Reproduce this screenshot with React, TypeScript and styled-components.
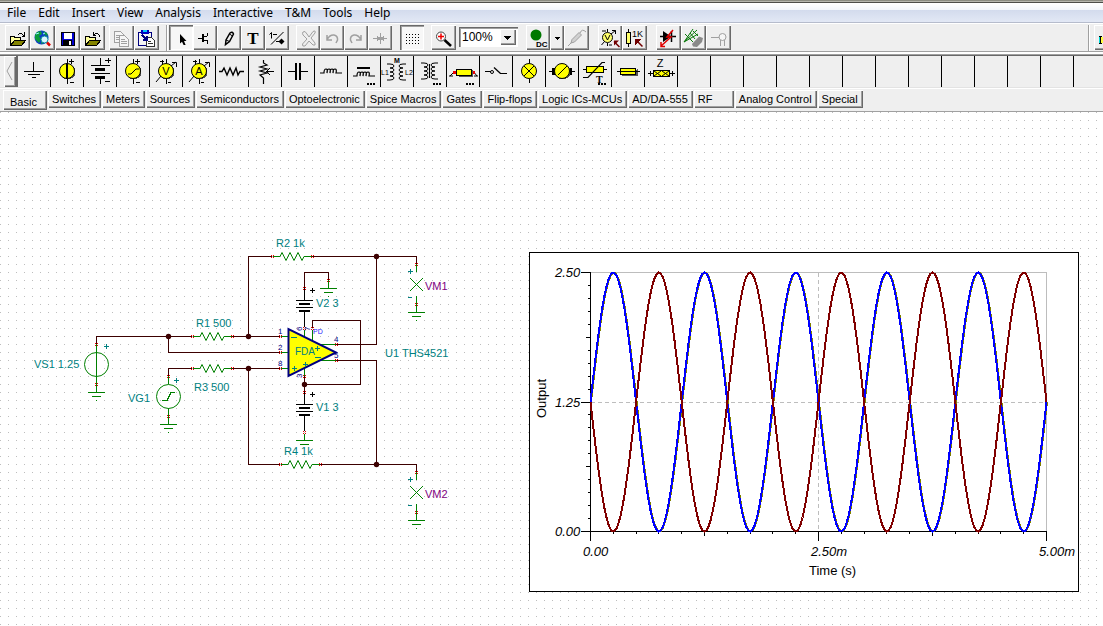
import React from "react";
import styled, { createGlobalStyle, css } from "styled-components";

const GlobalStyle = createGlobalStyle`
  *, *::before, *::after { box-sizing: border-box; }
  html, body, #root { height: 100%; margin: 0; }
  body { background: #efefef; overflow: hidden; }
`;

const face = "#efefef";
const sans = `"Liberation Sans", Arial, sans-serif`;

const AppFrame = styled.div`
  display: flex;
  flex-direction: column;
  height: 100%;
  overflow: hidden;
  color: #000;
  font: 11px/14px ${sans};
`;

const TitleEdge = styled.div`
  flex: none;
  height: 3px;
  background: linear-gradient(#8a8a80 0 1px, #b5b5ad 1px 2px, #4c4c48 2px);
`;

const MenuBar = styled.nav`
  flex: none;
  display: flex;
  height: 20px;
  padding-left: 1px;
  background: linear-gradient(#fff 0, #f1f4fa 7px, #d3dbed 7px, #e2e8f5 19px);
  border-bottom: 1px solid #b6bccc;
`;

const MenuItem = styled.button`
  height: 19px;
  margin: 0;
  padding: 0 6px;
  border: 0;
  background: none;
  color: #000;
  font: 12px/19px "Noto Sans", "Open Sans", sans-serif;
`;

const ToolBar = styled.div`
  flex: none;
  display: flex;
  align-items: flex-start;
  height: 29px;
  padding: 1px 0 0 5px;
  background: ${face};
  border-top: 1px solid #fff;
  border-bottom: 1px solid #a0a0a0;
`;

const ToolGroup = styled.div<{ $gap?: number }>`
  flex: none;
  display: flex;
  margin-right: ${(p) => p.$gap ?? 0}px;
`;

const raised = css`
  box-shadow: inset 1px 1px #fff, inset -1px -1px #696969, inset -2px -2px #a0a0a0;
`;

const sunken = css`
  background: #f7f7f7;
  box-shadow: inset 1px 1px #696969, inset 2px 2px #a0a0a0, inset -1px -1px #fff;
`;

const ToolButton = styled.button<{ $width?: number; $pressed?: boolean }>`
  width: ${(p) => p.$width ?? 24}px;
  height: 25px;
  margin: 0;
  padding: 0;
  border: 0;
  background: ${face};
  overflow: hidden;
  ${(p) => (p.$pressed ? sunken : raised)}
  svg { display: block; }
`;

const Divider = styled.span`
  width: 2px;
  height: 26px;
  margin-right: 1px;
  border-left: 1px solid #a0a0a0;
  border-right: 1px solid #fff;
`;

const ZoomBox = styled.label`
  position: relative;
  display: flex;
  width: 59px;
  height: 20px;
  margin: 2px 8px 0 3px;
  ${sunken}
  background: #fff;
`;

const ZoomSelect = styled.select`
  appearance: none;
  flex: 1;
  width: 100%;
  border: 0;
  padding: 0 18px 0 3px;
  background: none;
  color: #000;
  font: 12px/16px ${sans};
`;

const ZoomArrow = styled.span`
  position: absolute;
  top: 2px;
  right: 2px;
  width: 16px;
  height: 16px;
  background: ${face};
  pointer-events: none;
  ${raised}
  svg { display: block; }
`;

const Spacer = styled.span`
  flex: 1;
`;

const PartsBar = styled.div`
  flex: none;
  display: flex;
  height: 36px;
  padding: 4px 0 0 4px;
  background: linear-gradient(#fff 0 2px, #a0a0a0 2px 3px, #696969 3px 4px, ${face} 4px 35px, #e3e3e3 35px);
`;

const ScrollButton = styled.button`
  flex: none;
  width: 12px;
  height: 31px;
  padding: 0;
  border: 0;
  background: ${face};
  ${raised}
  svg { display: block; }
`;

const PartsRail = styled.div`
  flex: 1;
  display: flex;
  overflow: hidden;
  height: 31px;
  border-left: 2px solid #696969;
`;

const PartCell = styled.button`
  flex: none;
  width: 33px;
  height: 31px;
  margin: 0;
  padding: 0;
  border: 0;
  border-right: 1px solid #000;
  background: ${face};
  svg { display: block; }
`;

const TabBar = styled.div`
  flex: none;
  display: flex;
  align-items: flex-start;
  gap: 1px;
  height: 24px;
  padding: 1px 0 0 3px;
  background: ${face};
  border-top: 1px solid #fff;
  border-bottom: 1px solid #a0a0a0;
`;

const Tab = styled.button<{ $active?: boolean }>`
  flex: none;
  min-width: ${(p) => (p.$active ? 44 : 40)}px;
  height: ${(p) => (p.$active ? 20 : 18)}px;
  margin: 0;
  padding: ${(p) => (p.$active ? "3px 7px 0" : "0 5px 0 4px")};
  border: 0;
  background: ${face};
  color: #000;
  text-align: left;
  white-space: nowrap;
  font: 11px/16px ${sans};
  ${raised}
`;

const Canvas = styled.main`
  flex: 1;
  display: flex;
  align-items: flex-start;
  gap: 29px;
  min-height: 0;
  overflow: hidden;
  background-color: #fff;
  background-image: linear-gradient(transparent 1px, #fff 1px), linear-gradient(90deg, #bdbdbd 1px, #fff 1px);
  background-size: 8px 8px;
`;

const Schematic = styled.svg`
  flex: none;
  display: block;
  font-family: ${sans};
`;

const Chart = styled.svg`
  flex: none;
  display: block;
  margin-top: 140px;
  background: #fff;
  border: 1px solid #000;
  font-family: ${sans};
`;

const Line = styled.path<{ $color?: string; $width?: number }>`
  fill: none;
  stroke: ${(p) => p.$color ?? "#000"};
  stroke-width: ${(p) => p.$width ?? 1}px;
`;

const Label = styled.text<{ $color?: string; $size?: number }>`
  fill: ${(p) => p.$color ?? "#008080"};
  font-size: ${(p) => p.$size ?? 11}px;
`;

/* ---------- toolbar icons, 24 x 24 ---------- */

function Glyph({ children, smooth }: { children?: React.ReactNode; smooth?: boolean }) {
  return (
    <svg width="24" height="24" viewBox="0 0 24 24" shapeRendering={smooth ? "auto" : "crispEdges"} aria-hidden="true">
      {children}
    </svg>
  );
}

const Folder = ({ arrow }: { arrow: string }) => (
  <Glyph>
    <path d="M5.5 19.500V10.500H8.500L10.500 11.500H15.500V14.500" fill="#ffff9c" stroke="#000" />
    <path d="M5.500 19.500L9.500 14.500H20.500L16.500 19.500Z" fill="#848400" stroke="#000" />
    <Line d={arrow} />
  </Glyph>
);

const toolIcons: Record<string, React.ReactNode> = {
  open: <Folder arrow="M13 8.500H14M14 7.500H17M17 8.500H18M18 9.500H20M17 10.500H20M19.500 6V10" />,
  revert: <Folder arrow="M19.500 9V11M18 8.500H19M15 7.500H18M14 8.500H15M13.500 6V10M13 9.500H16" />,
  web: (
    <Glyph smooth>
      <circle cx="11.500" cy="11.500" r="7" fill="#0a3cc8" />
      <path d="M7 6L11 5L12 8L9 10L11 13L9 17L5 13L5 9Z M13 5L17 7L18 10L15 9Z M12 14L15 13L14 17L11 18Z" fill="#0c9b3c" />
      <path d="M6 8L9 7M13 8L15 7" stroke="#9ff" />
      <circle cx="14.500" cy="13.500" r="3.500" fill="#d9f6ff" stroke="#0b8c9b" />
      <path d="M17 16.500L20 19.500" stroke="#d00" strokeWidth="2.500" />
    </Glyph>
  ),
  save: (
    <Glyph>
      <rect x="6" y="6" width="14" height="14" fill="#000" />
      <rect x="7" y="7" width="12" height="12" fill="#0000d0" />
      <rect x="9" y="7" width="8" height="6" fill="#fff" />
      <rect x="8" y="14" width="9" height="5" fill="#000" />
      <rect x="14" y="15" width="2" height="4" fill="#fff" />
    </Glyph>
  ),
  copy: (
    <Glyph>
      <path d="M5.500 5.500H11.500L14.500 8.500V16.500H5.500Z M7 9.500H12M7 11.500H12M7 13.500H12" fill="#f5f5f5" stroke="#a0a0a0" />
      <path d="M10.500 9.500H15.500L19.500 13.500V20.500H10.500Z M12 13.500H16M12 15.500H18M12 17.500H18" fill="#f5f5f5" stroke="#a0a0a0" />
    </Glyph>
  ),
  paste: (
    <Glyph>
      <path d="M4.500 6.500H17.500V19.500H4.500Z" fill="#f4f4f4" stroke="#000080" />
      <rect x="7" y="4" width="8" height="4" fill="#0000c0" />
      <rect x="9" y="4" width="4" height="2" fill="#00c8ff" />
      <path d="M12.500 11.500H17.500L20.500 14.500V20.500H12.500Z M14 15.500H17M14 17.500H19" fill="#fff" stroke="#333" />
      <path d="M8 9L13 14M13 10V14H9" stroke="#000080" strokeWidth="2" fill="none" />
    </Glyph>
  ),
  select: (
    <Glyph smooth>
      <path d="M11 8V17.500L13 15.800L14.600 19H16.600L15 15H17.500Z" fill="#000" />
    </Glyph>
  ),
  wire: (
    <Glyph>
      <Line d="M5 12.500H10M10 10.500H14M14.500 7V10M10 14.500H14M14.500 14V18M14 17.500H15" />
      <Line d="M10 8V16" $width={2} />
    </Glyph>
  ),
  pen: (
    <Glyph smooth>
      <path d="M8.500 18.500L9 14L13 7Q15.500 5 16.500 8L12.500 15.500Z" fill="none" stroke="#000" strokeWidth="1.500" />
      <path d="M12.500 8L15.500 10M9 14L12.500 15.500M8.500 18.500V16" stroke="#000" fill="none" />
    </Glyph>
  ),
  text: (
    <Glyph>
      <text x="12" y="18" textAnchor="middle" fontFamily="Liberation Serif" fontWeight="700" fontSize="17">T</text>
    </Glyph>
  ),
  formula: (
    <Glyph smooth>
      <path d="M4.500 8.500L6.500 6.500V12.500M8 8.500H12M6 18.500L18.500 6" fill="none" stroke="#000" />
      <path d="M11 15.500H19" stroke="#000" />
      <path d="M16.500 12.500L19.500 15.500L16.500 18.500L13.500 15.500Z" />
    </Glyph>
  ),
  cut: (
    <Glyph smooth>
      <path d="M7 6Q9 4 11 8L13 11L17 5.500Q20 4 19 7L15 12L19 17Q20 20 17 19L13 15L9 20Q6 21 6.500 18L11 13L7 9Q6 7 7 6Z" fill="none" stroke="#a0a0a0" />
    </Glyph>
  ),
  undo: (
    <Glyph smooth>
      <path d="M7.500 13Q10 8.500 14 9Q18 10 17.500 14L16 17M7 9V14H12" fill="none" stroke="#a0a0a0" strokeWidth="1.500" />
    </Glyph>
  ),
  redo: (
    <Glyph smooth>
      <path d="M16.500 13Q14 8.500 10 9Q6 10 6.500 14L8 17M17 9V14H12" fill="none" stroke="#a0a0a0" strokeWidth="1.500" />
    </Glyph>
  ),
  node: (
    <Glyph>
      <path d="M5 12.500H19M12.500 7V18M9.500 10V15M15.500 10V15" stroke="#a0a0a0" />
      <path d="M10 11L15 14M15 11L10 14" stroke="#a0a0a0" />
    </Glyph>
  ),
  grid: (
    <Glyph>
      {[8, 11, 14, 17].map((y) => (
        <Line key={y} d={`M6 ${y}.500H21`} strokeDasharray="1 2" />
      ))}
    </Glyph>
  ),
  zoom: (
    <Glyph smooth>
      <circle cx="10" cy="10.500" r="4.500" fill="#fff" stroke="#444" />
      <path d="M7 10.500H13M10 7.500V13.500" stroke="#e00" strokeWidth="1.500" />
      <path d="M13.500 14L20 20" stroke="#000" strokeWidth="2.500" />
    </Glyph>
  ),
  dc: (
    <Glyph smooth>
      <circle cx="10" cy="9" r="5.500" fill="#007800" />
      <text x="10" y="21" fontFamily="Liberation Sans" fontWeight="700" fontSize="8">DC</text>
    </Glyph>
  ),
  more: (
    <Glyph>
      <path d="M4 11H10L7 14Z" fill="#000" />
    </Glyph>
  ),
  probe: (
    <Glyph smooth>
      <path d="M4 20L8 16" stroke="#a0a0a0" />
      <path d="M8 13.500L15 6.500L17.500 9L10.500 16L7 17Z" fill="#d0d0d0" stroke="#a0a0a0" />
      <path d="M16 7Q18 2 22 6" stroke="#a0a0a0" fill="none" />
    </Glyph>
  ),
  meter: (
    <Glyph smooth>
      <circle cx="9.500" cy="11.500" r="5" fill="#ffff6a" stroke="#000" />
      <path d="M7 9L9.500 14L12 9M3.500 19L6.500 15.500M13 8L17.500 4.500M14 4.500H17.500V8M9.500 3V6M4 5H8M9.500 17V20M11 19H14" stroke="#000" fill="none" />
      <path d="M21.500 21L16 15.500" stroke="#700000" strokeWidth="1.500" />
      <path d="M16 14.500H21L16 19.500Z" fill="#700000" />
    </Glyph>
  ),
  ohm: (
    <Glyph>
      <path d="M6.500 3V21" stroke="#000" />
      <rect x="4.500" y="6.500" width="4" height="11" fill="#ffff6a" stroke="#000" />
      <text x="10" y="11" fontFamily="Liberation Sans" fontSize="9">1K</text>
      <path d="M20.500 20.500L14 14" stroke="#700000" shapeRendering="auto" strokeWidth="1.500" />
      <path d="M13 13H19L13 19Z" fill="#700000" />
    </Glyph>
  ),
  diode: (
    <Glyph smooth>
      <path d="M4 10.500H20M15.500 5V16" stroke="#000" strokeWidth="1.500" />
      <path d="M7 5L15 10.500L7 16Z" />
      <path d="M17 4L11 11H15L5 20M5 16V20.500H9" stroke="#e00000" strokeWidth="1.500" fill="none" />
    </Glyph>
  ),
  sensor: (
    <Glyph smooth>
      <path d="M3 16L16 4M3 16L17 8M3 16L12 3M4 8L12 16M9 7L14 13M12 5L17 10" stroke="#087808" fill="none" />
      <path d="M11 18L18 10.500L22 12L21 16L16 21L12 20.500Z" fill="#8a8a8a" />
    </Glyph>
  ),
  pin: (
    <Glyph smooth>
      <path d="M5 11.500H13M14.500 14V20M18.500 14V20" stroke="#a0a0a0" />
      <circle cx="16.500" cy="11" r="3.500" fill="#f5f5f5" stroke="#a0a0a0" />
    </Glyph>
  ),
  edge: (
    <Glyph>
      <rect x="5" y="11" width="1" height="6" fill="#0dd" />
      <path d="M6.500 11V18M5 10.500H8M5 17.500H8" stroke="#000" />
      <rect x="7" y="11" width="6" height="6" fill="#ffff40" />
    </Glyph>
  ),
};

/* ---------- component icons, 32 x 31 ---------- */

const yellow = "#ffff00";

const Disc = ({ children }: { children?: React.ReactNode }) => (
  <>
    <circle cx="17" cy="16" r="7.500" fill="#555" />
    <circle cx="16" cy="15" r="7.500" fill={yellow} stroke="#000" shapeRendering="auto" />
    <Line d="M16.500 3V7M16.500 23V28M18 5.500H23M20.500 3V8M19 26.500H23" />
    {children}
  </>
);

const MeterDisc = ({ letter }: { letter: string }) => (
  <>
    <circle cx="17" cy="16" r="7.500" fill="#555" />
    <circle cx="16" cy="15" r="7.500" fill={yellow} stroke="#000" shapeRendering="auto" />
    <Line d="M16.500 3V7M16.500 23V28M10 5.500H14M12.500 4V8M18 26.500H21" />
    <Line d="M6 26L11 20M21 10L26 6M22 6.500H26.500V11" shapeRendering="auto" />
    <text x="16" y="19" textAnchor="middle" fontSize="11" fontFamily="Liberation Sans">{letter}</text>
  </>
);

const Dots = () => <Line d="M19 28H27" $width={2} strokeDasharray="2 1" />;

const coil = (x: number, y: number) =>
  `M${x} ${y}h4` + Array.from({ length: 4 }, () => "q0 -4 2 -4q2 0 1 4").join("") + "h6";

const sideCoil = (x: number, y: number, s: number) =>
  `M${x} ${y}h${3 * s}` +
  Array.from({ length: 4 }, () => `q${4 * s} 0 ${4 * s} 2q0 2 ${-4 * s} 2`).join("") +
  `h${-3 * s}`;

const partIcons: React.ReactNode[] = [
  <>
    <Line d="M15.500 6V15" />
    <Line d="M6 15.500H26M10 18.500H22M14 21.500H18" />
  </>,
  <Disc><Line d="M16 7V23" $width={2} /></Disc>,
  <>
    <Line d="M16.500 2V9M7 9.500H26M7 17.500H26M16.500 21V28M21 4.500H27M24.500 2V7M21 25.500H26" />
    <Line d="M11 13H21M11 21H21" $width={3} />
  </>,
  <Disc><Line d="M11 18H14L19 13H22" shapeRendering="auto" /></Disc>,
  <MeterDisc letter="V" />,
  <MeterDisc letter="A" />,
  <path d="M3 15.500H6L8 12L11 19L14 12L17 19L20 12L22 19L24 15.500H28" fill="none" stroke="#000" strokeWidth="1.400" shapeRendering="auto" />,
  <>
    <path d="M14.500 4V7L18 9L11 11L18 13L11 15L18 17L11 19L14.500 22V28" fill="none" stroke="#000" strokeWidth="1.200" shapeRendering="auto" />
    <Line d="M17 15.500H25" />
    <Line d="M17.500 15.500L21 12M17.500 15.500L21 19" shapeRendering="auto" />
  </>,
  <>
    <Line d="M6 15.500H13M19 15.500H26" />
    <Line d="M14 7V24M18 7V24" $width={2} />
  </>,
  <path d={coil(5, 17)} fill="none" stroke="#000" strokeWidth="1.200" shapeRendering="auto" />,
  <>
    <path d={coil(5, 20)} fill="none" stroke="#000" strokeWidth="1.200" shapeRendering="auto" />
    <Line d="M9 12H22" $width={2} />
    <Dots />
  </>,
  <>
    <Line d={`${sideCoil(6, 8, 1)} ${sideCoil(25, 8, -1)}`} shapeRendering="auto" />
    <text x="16" y="7" textAnchor="middle" fontSize="7" fontWeight="700" fontFamily="Liberation Sans">M</text>
    <text x="0" y="19" fontSize="7" fontFamily="Liberation Sans">L1</text>
    <text x="24" y="19" fontSize="7" fontFamily="Liberation Sans">L2</text>
  </>,
  <>
    <Line d={`${sideCoil(7, 7, 1)} ${sideCoil(24, 7, -1)}`} shapeRendering="auto" />
    <Line d="M15.500 8V22" />
    <Dots />
  </>,
  <>
    <Line d="M3 20L8 15M2 20H6M26 15L30 20M27 20H31" shapeRendering="auto" />
    <path d="M6 15H9V18H6ZM25 15H28V18H25Z" fill="#e00" />
    <path d="M11 21H26V14Z" fill="#555" />
    <path d="M9.500 13.500H24.500V19.500H9.500Z" fill={yellow} stroke="#000" />
    <Dots />
  </>,
  <>
    <Line d="M5 15.500H11M20 17.500H27" />
    <circle cx="12" cy="16" r="1.500" fill="none" stroke="#000" shapeRendering="auto" />
    <path d="M14 11.500L20.500 17.500" stroke="#000" strokeWidth="1.300" shapeRendering="auto" />
  </>,
  <>
    <circle cx="16" cy="15" r="7.500" fill={yellow} stroke="#000" shapeRendering="auto" />
    <Line d="M11 10L21 20M21 10L11 20" shapeRendering="auto" />
    <Line d="M16.500 3V7M16.500 23V27" />
  </>,
  <>
    <Line d="M3 15.500H29" />
    <path d="M6 12H26V19H6Z" />
    <circle cx="17" cy="16" r="7.500" fill="#555" />
    <circle cx="16" cy="15" r="7.500" fill={yellow} stroke="#000" shapeRendering="auto" />
    <Line d="M12 19L21 10" shapeRendering="auto" />
  </>,
  <>
    <Line d="M4 13.500H28" />
    <path d="M7.500 10.500H24.500V16.500H7.500Z" fill={yellow} stroke="#000" />
    <path d="M4 21.500H9L23 6.500H26" fill="none" stroke="#000" strokeWidth="1.200" shapeRendering="auto" />
    <text x="17" y="27" fontSize="10" fontWeight="700" fontFamily="Liberation Serif">T</text>
    <Dots />
  </>,
  <>
    <path d="M9 20H26V13Z" fill="#555" />
    <path d="M8.500 12.500H23.500V18.500H8.500Z" fill={yellow} stroke="#000" />
    <Line d="M5 15.500H28" />
  </>,
  <>
    <Line d="M3 17.500H30M5.500 15V20M27.500 15V20" />
    <path d="M8.500 14.500H24.500V20.500H8.500Z" fill={yellow} stroke="#000" />
    <Line d="M9 15L16 20M16 15L9 20M17 15L24 20M24 15L17 20" shapeRendering="auto" />
    <text x="15" y="11" textAnchor="middle" fontSize="11" fontFamily="Liberation Sans">Z</text>
  </>,
];

const partNames = [
  "Ground", "Voltage source", "Battery", "Voltage generator", "Voltmeter", "Ammeter", "Resistor", "Potentiometer",
  "Capacitor", "Inductor", "Iron core inductor", "Coupled inductors", "Transformer", "Relay", "Switch", "Lamp", "Motor",
  "Thermistor", "Fuse", "Impedance",
];

/* ---------- schematic symbols ---------- */

const wireColor = "#3c0000";
const green = "#008000";

const Pin = ({ x, y }: { x: number; y: number }) => (
  <path
    fill="#e80000"
    d={[[-1, -1], [1, -1], [-1, 1], [1, 1]].map(([dx, dy]) => `M${x + dx} ${y + dy}h1v1h-1z`).join("")}
  />
);

const Node = ({ x, y }: { x: number; y: number }) => (
  <circle cx={x + 0.5} cy={y + 0.5} r="2.700" fill={wireColor} shapeRendering="auto" />
);

const Ground = ({ x, y }: { x: number; y: number }) => (
  <Line $color={green} d={`M${x - 8} ${y + 0.5}h17M${x - 4} ${y + 4.5}h9M${x} ${y + 8.5}h1`} />
);

const Resistor = ({ x, y }: { x: number; y: number }) => (
  <>
    <Line $color={green} d={`M${x + 1} ${y + 0.5}h7M${x + 32} ${y + 0.5}h8`} />
    <Line
      $color={green}
      shapeRendering="auto"
      d={`M${x + 8} ${y + 0.5}l2 -4l4 8l4 -8l4 8l4 -8l4 8l2 -4`}
    />
    <Pin x={x} y={y} />
    <Pin x={x + 40} y={y} />
  </>
);

const Plus = ({ x, y, color }: { x: number; y: number; color: string }) => (
  <Line $color={color} d={`M${x - 2} ${y + 0.5}h5M${x + 0.5} ${y - 2}v5`} />
);

const Battery = ({ x, y }: { x: number; y: number }) => (
  <>
    <Line d={`M${x + 0.5} ${y}V${y + 12}M${x + 0.5} ${y + 24}V${y + 39}M${x - 8} ${y + 12.5}h17M${x - 8} ${y + 19.5}h17`} />
    <Line $width={2} d={`M${x - 5} ${y + 16}h11M${x - 5} ${y + 23}h11`} />
    <Plus x={x + 8} y={y + 2} color="#000" />
    <Pin x={x} y={y} />
    <Pin x={x} y={y + 40} />
  </>
);

const VoltMeter = ({ x, y, name }: { x: number; y: number; name: string }) => (
  <>
    <Line $color={green} d={`M${x + 0.5} ${y}v8M${x + 0.5} ${y + 32}v16`} />
    <Line $color={green} shapeRendering="auto" d={`M${x - 6} ${y + 14}l13 13M${x + 7} ${y + 14}l-13 13`} />
    <Plus x={x - 6} y={y + 7} color="#008080" />
    <Line $color="#008080" d={`M${x - 8} ${y + 33.5}h4`} />
    <Pin x={x} y={y} />
    <Pin x={x} y={y + 40} />
    <Ground x={x} y={y + 48} />
    <Label $color="#800080" x={x + 9} y={y + 26}>{name}</Label>
  </>
);

const Circuit = () => (
  <Schematic width="500" height="514" viewBox="0 112 500 514" shapeRendering="crispEdges" role="img" aria-label="Differential amplifier schematic">
    <Line
      $color={wireColor}
      d="M96.500 344V336.500H192M168.500 336V352.500H280M168.500 376V368.500H192M232 336.500H280M248.500 336V256.500H272M312 256.500H416.500V264
         M376.500 256V344.500H336M232 368.500H280M248.500 368V464.500H280M320 464.500H416.500V472M376.500 464V360.500H336
         M304.500 288V272.500H328.500V280M312.500 328V320.500H360.500V384.500H304.500M304.500 376V392"
    />

    <Line $color={green} d="M96.500 344V392" />
    <circle cx="96.500" cy="364.500" r="12" fill="none" stroke={green} shapeRendering="auto" />
    <Plus x={106} y={346} color="#008080" />
    <Pin x={96} y={344} />
    <Pin x={96} y={384} />
    <Ground x={96} y={392} />
    <Label x="34" y="368">VS1 1.25</Label>

    <Line $color={green} d="M168.500 376V384M168.500 408V424" />
    <circle cx="168.500" cy="396.500" r="12" fill="none" stroke={green} shapeRendering="auto" />
    <Line $color={green} d="M162 400.500H167L171 392.500H175" />
    <Plus x={176} y={380} color="#008080" />
    <Pin x={168} y={376} />
    <Pin x={168} y={416} />
    <Ground x={168} y={424} />
    <Label x="128" y="402">VG1</Label>

    <Resistor x={192} y={336} />
    <Label x="196" y="327">R1 500</Label>
    <Resistor x={192} y={368} />
    <Label x="194" y="391">R3 500</Label>
    <Resistor x={272} y={256} />
    <Label x="276" y="247">R2 1k</Label>
    <Resistor x={280} y={464} />
    <Label x="284" y="455">R4 1k</Label>

    <Line $color={green} d="M328.500 280V288" />
    <Pin x={328} y={280} />
    <Ground x={328} y={288} />
    <Battery x={304} y={288} />
    <Label x="316" y="307">V2 3</Label>
    <Battery x={304} y={392} />
    <Line $color={green} d="M304.500 434V440" />
    <Line $color={green} d="M296 440.500H313M300 444.500H309" />
    <Label x="316" y="411">V1 3</Label>

    <Line $color={green} d="M281 336.500H288M281 352.500H288M281 368.500H288M318 344.500H336M318 360.500H336M304.500 330V340M312.500 330V344M304.500 366V376" />
    <path d="M288.500 329V376L336 352.500Z" fill={yellow} stroke="#000080" strokeWidth="2" shapeRendering="auto" />
    <Line $color="#008080" d="M291 337.500H297M315 357.500H321" />
    <Plus x={294} y={368} color="#008080" />
    <Plus x={317} y={348} color="#008080" />
    <Plus x={305} y={364} color="#008080" />
    <Label $size={10} x="295" y="355">FDA</Label>
    <Label $color="#000080" $size={8} x="278" y="334">1</Label>
    <Label $color="#000080" $size={8} x="278" y="350">2</Label>
    <Label $color="#000080" $size={8} x="278" y="366">8</Label>
    <Label $color="#000080" $size={8} x="334" y="342">4</Label>
    <Label $color="#000080" $size={8} x="334" y="358">5</Label>
    <Label $color="#000080" $size={8} transform="translate(302 331) rotate(-90)">6</Label>
    <Label $color="#000080" $size={8} transform="translate(310 331) rotate(-90)">7</Label>
    <Label $color="#000080" $size={8} transform="translate(302 378) rotate(-90)">3</Label>
    <Label $color="#2020ff" $size={7} x="313" y="334">PD</Label>
    {[336, 352, 368].map((y) => <Pin key={y} x={280} y={y} />)}
    <Pin x={336} y={344} />
    <Pin x={336} y={360} />
    <Pin x={312} y={328} />
    <Pin x={304} y={376} />
    <Label x="385" y="357">U1 THS4521</Label>

    <VoltMeter x={416} y={264} name="VM1" />
    <VoltMeter x={416} y={472} name="VM2" />

    <Node x={168} y={336} />
    <Node x={248} y={336} />
    <Node x={248} y={368} />
    <Node x={376} y={256} />
    <Node x={376} y={464} />
    <Node x={304} y={384} />
  </Schematic>
);

/* ---------- output chart ---------- */

const plot = { left: 61, right: 517, top: 20, bottom: 279 };

function wave(sign: number, shift = 0) {
  const mid = (plot.top + plot.bottom + 1) / 2;
  const amp = (plot.bottom - plot.top) / 2;
  const points: string[] = [];
  for (let x = 0; x <= 456; x += 2) {
    const y = mid - sign * amp * Math.sin((x / 456) * Math.PI * 10);
    points.push(`${plot.left + x + 0.5 + shift} ${y.toFixed(1)}`);
  }
  return "M" + points.join("L");
}

const tickLength = (i: number) => (i % 10 === 0 ? 9 : i % 5 === 0 ? 4 : 2);

const OutputChart = () => {
  const ticks = Array.from({ length: 21 }, (_, i) => {
    const x = Math.round(plot.left + i * 22.8) + 0.5;
    const y = Math.round(plot.bottom - i * 12.95) + 0.5;
    return `M${x} ${plot.bottom + 1}v${tickLength(i)}M${plot.left} ${y}h${-tickLength(i)}`;
  }).join("");
  return (
    <Chart width="550" height="340" viewBox="1 1 548 338" shapeRendering="crispEdges" role="img" aria-label="Output against time">
      <Line $color="#bdbdbd" d="M61 20.500H517.500V279" />
      <Line $color="#bdbdbd" strokeDasharray="4 3" d="M62 150.500H517M289.500 21V279" />
      <Line d={`M61.500 20V279.500H518${ticks}`} />
      <Line $color="#808000" $width={2} d={wave(1, 0.5)} />
      <Line $color="#0000ff" $width={2} d={wave(1)} />
      <Line $color="#800000" $width={2} d={wave(-1)} />
      <g fontStyle="italic">
        <Label $color="#000" $size={13} x="26" y="25">2.50</Label>
        <Label $color="#000" $size={13} x="26" y="155">1.25</Label>
        <Label $color="#000" $size={13} x="26" y="284">0.00</Label>
        <Label $color="#000" $size={13} x="54" y="304">0.00</Label>
        <Label $color="#000" $size={13} x="282" y="304">2.50m</Label>
        <Label $color="#000" $size={13} x="510" y="304">5.00m</Label>
      </g>
      <Label $color="#000" $size={13} x="280" y="323">Time (s)</Label>
      <Label $color="#000" $size={13} transform="translate(17 166) rotate(-90)">Output</Label>
    </Chart>
  );
};

const menus = ["File", "Edit", "Insert", "View", "Analysis", "Interactive", "T&M", "Tools", "Help"];

const toolGroups: { icons: string[]; width: number; gap: number; pressed?: string; divider?: boolean }[] = [
  { icons: ["open", "web", "save", "revert"], width: 25, gap: 4 },
  { icons: ["copy", "paste"], width: 25, gap: 7 },
  { icons: ["select", "wire", "pen", "text", "formula"], width: 24, gap: 7, pressed: "select", divider: true },
  { icons: ["cut", "undo", "redo", "node"], width: 24, gap: 8 },
  { icons: ["grid"], width: 24, gap: 7, pressed: "grid" },
  { icons: ["zoom"], width: 25, gap: 0 },
];

const tabs = [
  "Basic", "Switches", "Meters", "Sources", "Semiconductors", "Optoelectronic", "Spice Macros", "Gates", "Flip-flops",
  "Logic ICs-MCUs", "AD/DA-555", "RF", "Analog Control", "Special",
];

const emptyCells = Array.from({ length: 12 }, (_, i) => i);

export default function App() {
  return (
    <AppFrame>
      <GlobalStyle />
      <TitleEdge />
      <MenuBar>
        {menus.map((m) => <MenuItem key={m}>{m}</MenuItem>)}
      </MenuBar>
      <ToolBar>
        {toolGroups.map((g) => (
          <React.Fragment key={g.icons[0]}>
            {g.divider && <Divider />}
            <ToolGroup $gap={g.gap}>
              {g.icons.map((i) => (
                <ToolButton key={i} aria-label={i} $width={g.width} $pressed={g.pressed === i}>{toolIcons[i]}</ToolButton>
              ))}
            </ToolGroup>
          </React.Fragment>
        ))}
        <ZoomBox>
          <ZoomSelect aria-label="Zoom" defaultValue="100%">
            <option>50%</option>
            <option>100%</option>
            <option>200%</option>
          </ZoomSelect>
          <ZoomArrow>
            <svg width="16" height="16" viewBox="0 0 16 16" shapeRendering="crispEdges" aria-hidden="true">
              <path d="M4 7H11L7.500 11Z" />
            </svg>
          </ZoomArrow>
        </ZoomBox>
        <ToolGroup $gap={9}>
          <ToolButton aria-label="DC">{toolIcons.dc}</ToolButton>
          <ToolButton aria-label="DC options" $width={14}>{toolIcons.more}</ToolButton>
          <ToolButton aria-label="Probe" $width={25}>{toolIcons.probe}</ToolButton>
        </ToolGroup>
        <ToolGroup $gap={9}>
          <ToolButton aria-label="Meter">{toolIcons.meter}</ToolButton>
          <ToolButton aria-label="Component value" $width={25}>{toolIcons.ohm}</ToolButton>
        </ToolGroup>
        <ToolGroup>
          {["diode", "sensor", "pin"].map((i) => (
            <ToolButton key={i} aria-label={i} $width={25}>{toolIcons[i]}</ToolButton>
          ))}
        </ToolGroup>
        <Spacer />
        <ToolGroup $gap={-15}>
          <Divider />
          <ToolGroup $gap={3} />
          <ToolButton aria-label="Part list">{toolIcons.edge}</ToolButton>
        </ToolGroup>
      </ToolBar>
      <PartsBar>
        <ScrollButton aria-label="Scroll left">
          <svg width="12" height="31" viewBox="0 0 12 31" aria-hidden="true">
            <path d="M8 6L3 15L8 24" fill="none" stroke="#a0a0a0" />
          </svg>
        </ScrollButton>
        <PartsRail>
          {partIcons.map((icon, i) => (
            <PartCell key={partNames[i]} aria-label={partNames[i]}>
              <svg width="32" height="31" viewBox="0 0 32 31" shapeRendering="crispEdges" aria-hidden="true">{icon}</svg>
            </PartCell>
          ))}
          {emptyCells.map((i) => <PartCell key={i} aria-label="Empty slot" />)}
        </PartsRail>
      </PartsBar>
      <TabBar role="tablist">
        {tabs.map((t, i) => (
          <Tab key={t} role="tab" aria-selected={i === 0} $active={i === 0}>{t}</Tab>
        ))}
      </TabBar>
      <Canvas>
        <Circuit />
        <OutputChart />
      </Canvas>
    </AppFrame>
  );
}
